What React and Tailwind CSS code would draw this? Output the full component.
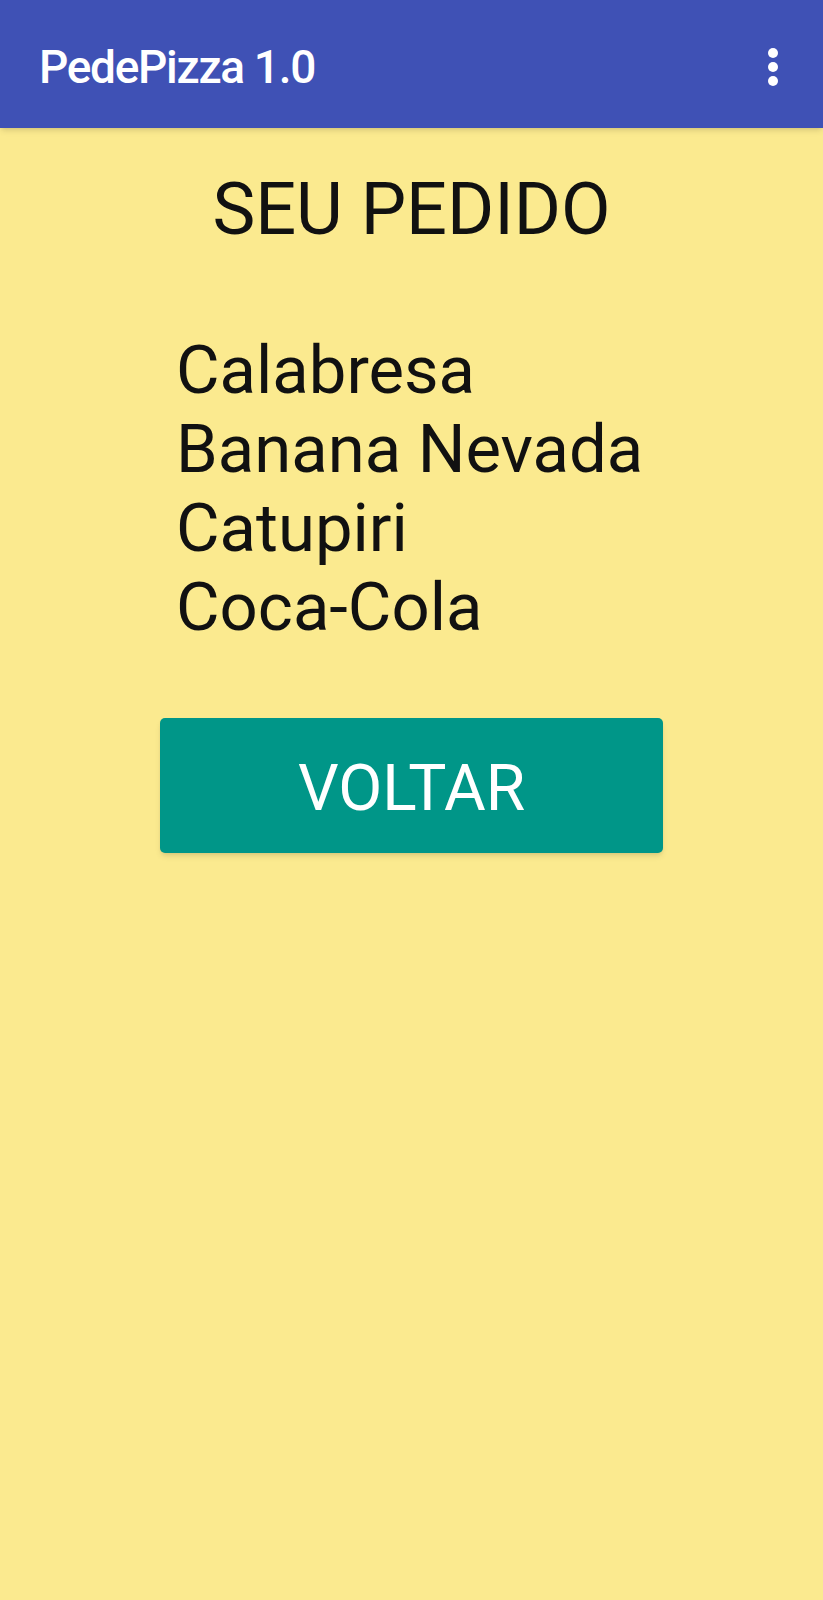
import React from "react";

const items = ["Calabresa", "Banana Nevada", "Catupiri", "Coca-Cola"];

function App() {
  return (
    <div
      className="min-h-[1600px] w-full flex flex-col bg-[#fbea8f]"
      style={{ fontFamily: "Roboto, 'Noto Sans', sans-serif" }}
    >
      <div className="h-[128px] w-full flex items-center justify-between pl-[39px] pr-[44px] pt-[6px] bg-[#3f51b5] shadow-md">
        <p className="text-[46px] font-medium tracking-[-1.3px] text-white leading-none">
          PedePizza 1.0
        </p>
        <svg width="12" height="40" viewBox="0 0 12 40" className="fill-white">
          <circle cx="6" cy="6" r="5" />
          <circle cx="6" cy="20" r="5" />
          <circle cx="6" cy="34" r="5" />
        </svg>
      </div>
      <div className="w-[503px] mx-auto flex flex-col text-[#111]">
        <p className="mt-[40px] text-center text-[72px] leading-[84px]">SEU PEDIDO</p>
        <div className="mt-[79px] pl-[16px] flex flex-col">
          {items.map((item, i) => (
            <p key={i} className="text-[67px] leading-[79px]">
              {item}
            </p>
          ))}
        </div>
        <button className="mt-[71px] h-[135px] w-full flex items-center justify-center pt-[6px] rounded-[5px] bg-[#009688] text-white text-[64px] shadow-md">
          VOLTAR
        </button>
      </div>
    </div>
  );
}

export default App;
